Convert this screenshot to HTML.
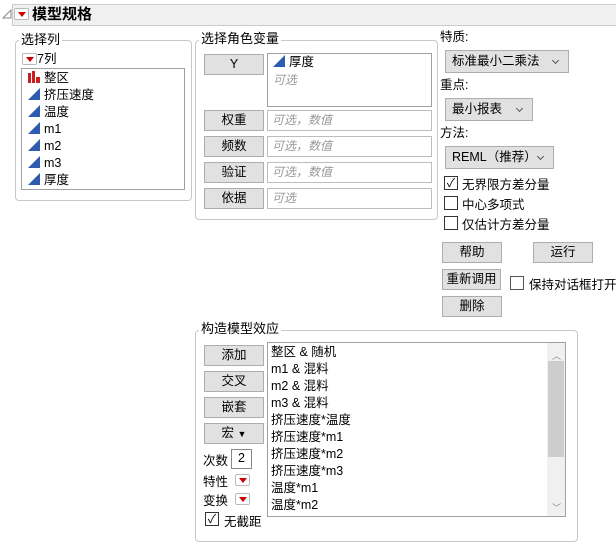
<!DOCTYPE html>
<html><head><meta charset="utf-8"><style>
*{box-sizing:border-box;margin:0;padding:0}
body{width:616px;height:544px;background:#fff;position:relative;overflow:hidden;font-family:"Liberation Sans","Noto Sans CJK SC",sans-serif;font-size:12.5px;color:#000;white-space:nowrap}
.a{position:absolute}
.grp{position:absolute;border:1px solid #c8c8c8;border-radius:4px}
.lbl{position:absolute;background:#fff;padding:0 2px;font-size:13px;line-height:15px}
.btn{position:absolute;background:#e1e1e1;border:1px solid #adadad;text-align:center;font-size:12.5px;line-height:18px}
.fld{position:absolute;border:1px solid #bdbdbd;background:#fff;color:#999;font-style:italic;padding-left:4px;font-size:12px;line-height:18px}
.dd{position:absolute;background:#e1e1e1;border:1px solid #adadad;padding-left:6px;line-height:20px;font-size:12.5px}
.dd:after{content:"";position:absolute;right:10px;top:7px;width:4px;height:4px;border-right:1px solid #555;border-bottom:1px solid #555;transform:rotate(45deg)}
.cb{position:absolute;width:14px;height:14px;border:1px solid #333;background:#fff;font-size:12px;line-height:12px;text-align:center}
.rt{position:absolute;width:15px;height:12px;border:1px solid #bbb;border-radius:2px;background:#fff}
.rt:after{content:"";position:absolute;left:3px;top:3px;border-left:4px solid transparent;border-right:4px solid transparent;border-top:5px solid #c00}
.tri{display:inline-block;width:12px;height:12px;vertical-align:-1px;margin-right:4px}
.item{position:absolute;left:6px;line-height:17px;font-size:12.5px}
</style></head><body>
<svg class="a" style="left:2px;top:9px" width="10" height="10"><path d="M9 1 L1 9 L9 9 Z" fill="none" stroke="#888"/></svg>
<div class="a" style="left:12px;top:4px;width:604px;height:22px;background:#f0f0f0;border:1px solid #ccc;border-right:none"></div>
<div class="rt" style="left:14px;top:8px"></div>
<div class="a" style="left:32px;top:4px;font-size:15px;font-weight:bold;line-height:22px">模型规格</div>

<div class="grp" style="left:15px;top:40px;width:177px;height:161px"></div>
<div class="lbl" style="left:19px;top:32px">选择列</div>
<div class="rt" style="left:22px;top:53px"></div>
<div class="a" style="left:37px;top:51px;line-height:16px">7列</div>
<div class="a" style="left:21px;top:68px;width:164px;height:122px;border:1px solid #a0a0a0">
<div class="item" style="top:1px"><svg class="tri" viewBox="0 0 12 12"><rect x="0" y="2" width="3" height="10" fill="#c8201e"/><rect x="4" y="0" width="3" height="12" fill="#c8201e"/><rect x="8" y="6" width="4" height="6" fill="#c8201e"/></svg>整区</div>
<div class="item" style="top:18px"><svg class="tri" viewBox="0 0 12 12"><path d="M0 12L12 0V12Z" fill="#2d5bb0"/></svg>挤压速度</div>
<div class="item" style="top:35px"><svg class="tri" viewBox="0 0 12 12"><path d="M0 12L12 0V12Z" fill="#2d5bb0"/></svg>温度</div>
<div class="item" style="top:52px"><svg class="tri" viewBox="0 0 12 12"><path d="M0 12L12 0V12Z" fill="#2d5bb0"/></svg>m1</div>
<div class="item" style="top:69px"><svg class="tri" viewBox="0 0 12 12"><path d="M0 12L12 0V12Z" fill="#2d5bb0"/></svg>m2</div>
<div class="item" style="top:86px"><svg class="tri" viewBox="0 0 12 12"><path d="M0 12L12 0V12Z" fill="#2d5bb0"/></svg>m3</div>
<div class="item" style="top:103px"><svg class="tri" viewBox="0 0 12 12"><path d="M0 12L12 0V12Z" fill="#2d5bb0"/></svg>厚度</div>
</div>

<div class="grp" style="left:195px;top:40px;width:243px;height:180px"></div>
<div class="lbl" style="left:199px;top:31px">选择角色变量</div>
<div class="btn" style="left:204px;top:54px;width:60px;height:21px">Y</div>
<div class="a" style="left:267px;top:53px;width:165px;height:54px;border:1px solid #a0a0a0">
<div class="item" style="left:5px;top:0"><svg class="tri" viewBox="0 0 12 12"><path d="M0 12L12 0V12Z" fill="#2d5bb0"/></svg>厚度</div>
<div class="a" style="left:5px;top:17px;color:#999;font-style:italic;font-size:12px">可选</div></div>
<div class="btn" style="left:204px;top:110px;width:60px;height:21px">权重</div>
<div class="fld" style="left:267px;top:110px;width:165px;height:21px">可选，数值</div>
<div class="btn" style="left:204px;top:136px;width:60px;height:21px">频数</div>
<div class="fld" style="left:267px;top:136px;width:165px;height:21px">可选，数值</div>
<div class="btn" style="left:204px;top:162px;width:60px;height:21px">验证</div>
<div class="fld" style="left:267px;top:162px;width:165px;height:21px">可选，数值</div>
<div class="btn" style="left:204px;top:188px;width:60px;height:21px">依据</div>
<div class="fld" style="left:267px;top:188px;width:165px;height:21px">可选</div>

<div class="a" style="left:440px;top:29px;line-height:16px">特质:</div>
<div class="dd" style="left:445px;top:50px;width:124px;height:23px">标准最小二乘法</div>
<div class="a" style="left:440px;top:77px;line-height:16px">重点:</div>
<div class="dd" style="left:445px;top:98px;width:88px;height:23px">最小报表</div>
<div class="a" style="left:440px;top:125px;line-height:16px">方法:</div>
<div class="dd" style="left:445px;top:146px;width:109px;height:23px">REML（推荐）</div>
<div class="cb" style="left:444px;top:176px">✓</div><div class="a" style="left:462px;top:174px">无界限方差分量</div>
<div class="cb" style="left:444px;top:196px"></div><div class="a" style="left:462px;top:194px">中心多项式</div>
<div class="cb" style="left:444px;top:216px"></div><div class="a" style="left:462px;top:214px">仅估计方差分量</div>
<div class="btn" style="left:442px;top:242px;width:60px;height:21px">帮助</div>
<div class="btn" style="left:533px;top:242px;width:60px;height:21px">运行</div>
<div class="btn" style="left:442px;top:269px;width:59px;height:21px">重新调用</div>
<div class="cb" style="left:510px;top:276px;border-color:#555"></div><div class="a" style="left:529px;top:274px">保持对话框打开</div>
<div class="btn" style="left:442px;top:296px;width:60px;height:21px">删除</div>

<div class="grp" style="left:195px;top:330px;width:383px;height:212px"></div>
<div class="lbl" style="left:199px;top:321px">构造模型效应</div>
<div class="btn" style="left:204px;top:345px;width:60px;height:21px">添加</div>
<div class="btn" style="left:204px;top:371px;width:60px;height:21px">交叉</div>
<div class="btn" style="left:204px;top:397px;width:60px;height:21px">嵌套</div>
<div class="btn" style="left:204px;top:423px;width:60px;height:21px">宏 <span style="font-size:9px">▼</span></div>
<div class="a" style="left:203px;top:450px">次数</div>
<div class="a" style="left:231px;top:449px;width:21px;height:20px;border:1px solid #888;text-align:center;line-height:17px">2</div>
<div class="a" style="left:203px;top:471px">特性</div><div class="rt" style="left:235px;top:474px"></div>
<div class="a" style="left:203px;top:490px">变换</div><div class="rt" style="left:235px;top:493px"></div>
<div class="cb" style="left:205px;top:512px">✓</div><div class="a" style="left:224px;top:511px">无截距</div>
<div class="a" style="left:267px;top:342px;width:299px;height:175px;border:1px solid #a0a0a0;overflow:hidden">
<div class="a" style="left:0;top:1px;line-height:17px;padding-left:3px">整区 &amp; 随机<br>m1 &amp; 混料<br>m2 &amp; 混料<br>m3 &amp; 混料<br>挤压速度*温度<br>挤压速度*m1<br>挤压速度*m2<br>挤压速度*m3<br>温度*m1<br>温度*m2</div>
<div class="a" style="left:279px;top:0;width:18px;height:173px;background:#f0f0f0"></div>
<div class="a" style="left:280px;top:18px;width:16px;height:96px;background:#cdcdcd"></div>
<div class="a" style="left:284px;top:6px;font-size:9px;color:#888">︿</div>
<div class="a" style="left:284px;top:158px;font-size:9px;color:#888">﹀</div>
</div>
</body></html>
